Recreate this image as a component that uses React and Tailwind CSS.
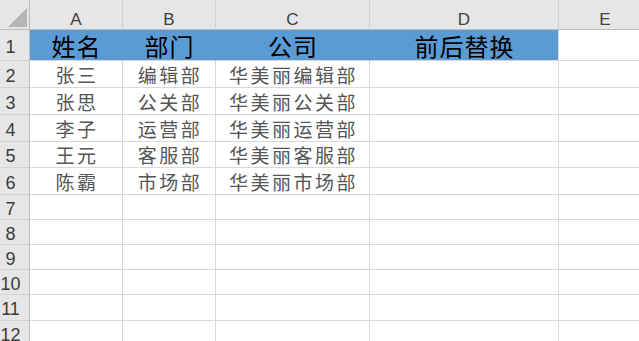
import React from "react";

const COLS = "grid grid-cols-[30px_93px_93px_154px_189px_93px]";
const CJK = { fontFamily: '"Noto Sans CJK SC", "Noto Sans", sans-serif' };
const LAT = { fontFamily: '"Liberation Sans", Arial, sans-serif' };

const data = [
  { n: "2", h: "h-[27px]", a: "张三", b: "编辑部", c: "华美丽编辑部" },
  { n: "3", h: "h-[27px]", a: "张思", b: "公关部", c: "华美丽公关部" },
  { n: "4", h: "h-[27px]", a: "李子", b: "运营部", c: "华美丽运营部" },
  { n: "5", h: "h-[26px]", a: "王元", b: "客服部", c: "华美丽客服部" },
  { n: "6", h: "h-[27px]", a: "陈霸", b: "市场部", c: "华美丽市场部" },
  { n: "7", h: "h-[25px]", a: "", b: "", c: "" },
  { n: "8", h: "h-[25px]", a: "", b: "", c: "" },
  { n: "9", h: "h-[25px]", a: "", b: "", c: "" },
  { n: "10", h: "h-[25px]", a: "", b: "", c: "" },
  { n: "11", h: "h-[26px]", a: "", b: "", c: "" },
  { n: "12", h: "h-[26px]", a: "", b: "", c: "" },
];

function RowHead({ children }) {
  return (
    <div
      className="flex items-center justify-center pr-[8px] pt-[3px] bg-[#e6e6e6] border-r border-b border-r-[#bdbdbd] border-b-[#d2d2d2] text-[18px] leading-none text-[#3c3c3c]"
      style={LAT}
    >
      {children}
    </div>
  );
}

function Cell({ children }) {
  return (
    <div
      className="flex items-center justify-center pl-[2px] border-r border-b border-[#d9d9d9] text-[19px] tracking-[2.5px] leading-none text-[#555555] whitespace-nowrap overflow-hidden"
      style={CJK}
    >
      {children}
    </div>
  );
}

function ColHead({ children }) {
  return (
    <div
      className="flex items-center justify-center pt-[9px] bg-[#e6e6e6] border-r border-b border-r-[#cfcfcf] border-b-[#bdbdbd] text-[17px] leading-none text-[#404040]"
      style={LAT}
    >
      {children}
    </div>
  );
}

function BlueCell({ children, last }) {
  return (
    <div
      className={
        "flex items-center justify-center pt-[2px] pl-[1px] bg-[#5b9bd5] border-b border-b-[#d9d9d9] border-r text-[24px] tracking-[1px] leading-none font-normal text-black whitespace-nowrap " +
        (last ? "border-r-[#d9d9d9]" : "border-r-[#5b9bd5]")
      }
      style={CJK}
    >
      {children}
    </div>
  );
}

export default function App() {
  return (
    <div className="w-[639px] h-[341px] overflow-hidden bg-white">
      <div className="w-[652px]">
        <div className={COLS + " h-[30px]"}>
          <div className="relative bg-[#e6e6e6] border-r border-b border-r-[#bdbdbd] border-b-[#bdbdbd]">
            <svg className="absolute left-[8px] top-[8px]" width="19" height="19" viewBox="0 0 19 19">
              <polygon points="19,0 19,19 0,19" fill="#b5b5b5" />
            </svg>
          </div>
          <ColHead>A</ColHead>
          <ColHead>B</ColHead>
          <ColHead>C</ColHead>
          <ColHead>D</ColHead>
          <ColHead>E</ColHead>
        </div>
        <div className={COLS + " h-[31px]"}>
          <RowHead>1</RowHead>
          <BlueCell>姓名</BlueCell>
          <BlueCell>部门</BlueCell>
          <BlueCell>公司</BlueCell>
          <BlueCell last>前后替换</BlueCell>
          <Cell></Cell>
        </div>
        {data.map((r) => (
          <div key={r.n} className={COLS + " " + r.h}>
            <RowHead>{r.n}</RowHead>
            <Cell>{r.a}</Cell>
            <Cell>{r.b}</Cell>
            <Cell>{r.c}</Cell>
            <Cell></Cell>
            <Cell></Cell>
          </div>
        ))}
      </div>
    </div>
  );
}
